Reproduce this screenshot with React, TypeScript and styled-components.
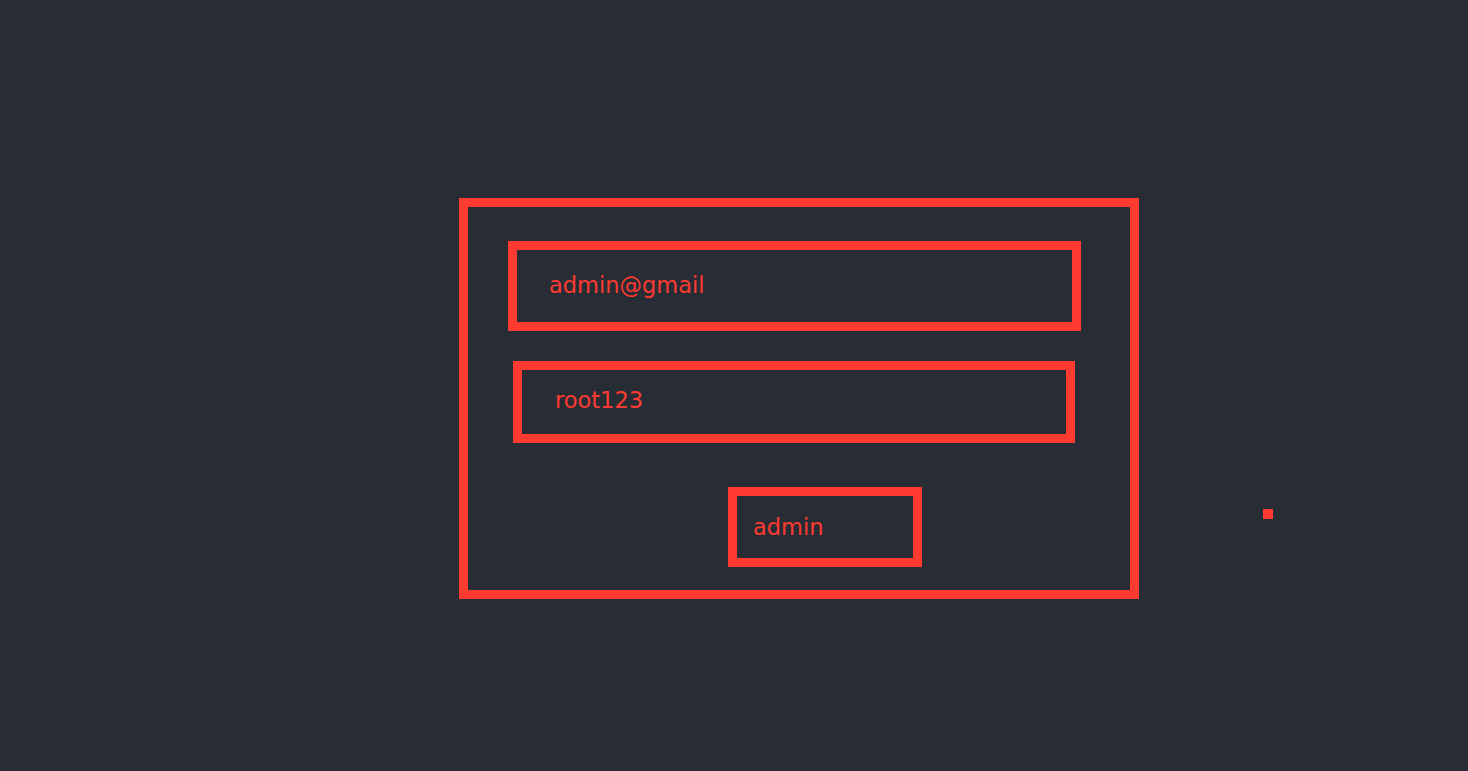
import React from "react";
import styled, { createGlobalStyle } from "styled-components";

const GlobalStyle = createGlobalStyle`
  html, body {
    margin: 0;
    padding: 0;
    background: #282c34;
  }
  body {
    font-family: "DejaVu Sans", Verdana, sans-serif;
  }
`;

const RED = "#ff3a30";

const Page = styled.div`
  min-height: 100vh;
  box-sizing: border-box;
  display: flex;
  align-items: flex-start;
  padding: 198px 0 0 459px;
  background: #282c34;
`;

const Form = styled.form`
  box-sizing: border-box;
  width: 680px;
  height: 401px;
  border: 9px solid ${RED};
  display: flex;
  flex-direction: column;
  align-items: flex-start;
  padding: 34px 0 0 40px;
`;

const Field = styled.input<{ $w: number; $h: number; $indent: number; $pad: number; $lift: number }>`
  box-sizing: border-box;
  width: ${(p) => p.$w}px;
  height: ${(p) => p.$h}px;
  margin: 0 0 0 ${(p) => p.$indent}px;
  border: 9px solid ${RED};
  background: transparent;
  color: ${RED};
  font-family: "DejaVu Sans", Verdana, sans-serif;
  font-size: 22.5px;
  padding: 0 0 ${(p) => p.$lift}px ${(p) => p.$pad}px;
  outline: none;
  & + & {
    margin-top: 30px;
  }
`;

const Submit = styled.button`
  box-sizing: border-box;
  width: 194px;
  height: 80px;
  margin: 44px 0 0 220px;
  border: 9px solid ${RED};
  background: transparent;
  color: ${RED};
  font-family: "DejaVu Sans", Verdana, sans-serif;
  font-size: 22.5px;
  text-align: left;
  padding: 0 0 0 16px;
  cursor: pointer;
`;

const Dot = styled.span`
  width: 10px;
  height: 10px;
  background: ${RED};
  margin: 311px 0 0 124px;
`;

export default function App() {
  return (
    <>
      <GlobalStyle />
      <Page>
        <Form onSubmit={(e) => e.preventDefault()}>
          <Field $w={573} $h={90} $indent={0} $pad={32} $lift={2} defaultValue="admin@gmail" />
          <Field $w={562} $h={82} $indent={5} $pad={33} $lift={5} defaultValue="root123" />
          <Submit type="submit">admin</Submit>
        </Form>
        <Dot />
      </Page>
    </>
  );
}
